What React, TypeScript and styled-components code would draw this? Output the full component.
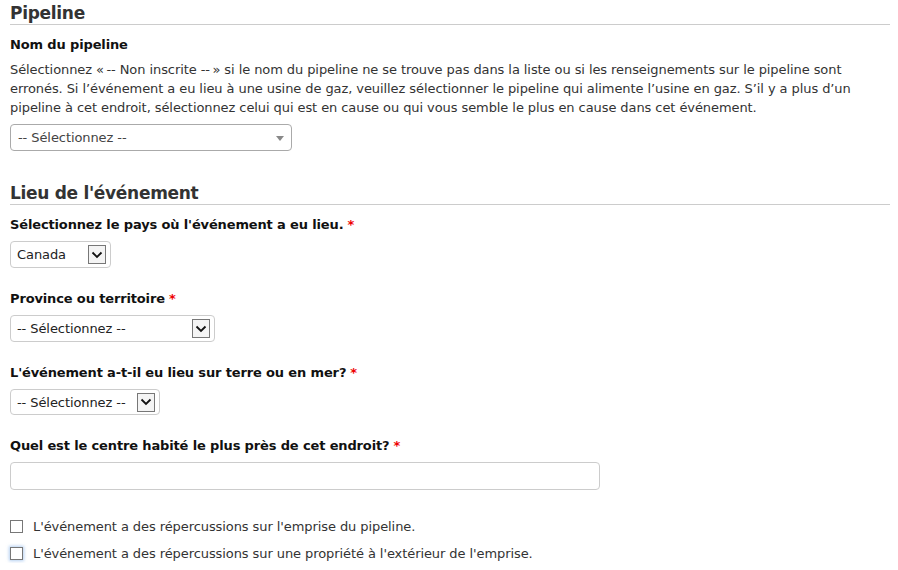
import React from "react";
import styled, { createGlobalStyle } from "styled-components";

const GlobalStyle = createGlobalStyle`
  html, body { margin: 0; padding: 0; background: #fff; }
  body {
    font-family: "DejaVu Sans", Verdana, sans-serif;
    font-size: 13px;
    letter-spacing: -0.08px;
    color: #333;
  }
`;

const Page = styled.div`
  width: 880px;
  padding: 3px 8px 0 10px;
`;

const SectionTitle = styled.h2<{ $top?: number }>`
  margin: ${(p) => p.$top ?? 0}px 0 10px 0;
  font-size: 17px;
  letter-spacing: -0.3px;
  line-height: 21px;
  font-weight: bold;
  color: #333;
  border-bottom: 1px solid #ccc;
`;

const Group = styled.div`
  display: flex;
  flex-direction: column;
  align-items: flex-start;
  gap: 7px;
  margin-bottom: 21px;
`;

const Label = styled.div`
  font-weight: bold;
  letter-spacing: -0.14px;
  line-height: 19px;
  color: #111;
`;

const Req = styled.span`
  color: #e00;
  margin-left: 4px;
`;

const Help = styled.p`
  margin: -1px 0 0 0;
  line-height: 19px;
  color: #333;
`;

const ChosenSelect = styled.div<{ $w: number }>`
  box-sizing: border-box;
  width: ${(p) => p.$w}px;
  height: 27px;
  border: 1px solid #aaa;
  border-radius: 4px;
  display: flex;
  align-items: center;
  justify-content: space-between;
  padding: 0 7px 0 7px;
  color: #444;
  background: #fff;
`;

const Triangle = styled.span`
  width: 0;
  height: 0;
  border-left: 4px solid transparent;
  border-right: 4px solid transparent;
  border-top: 5px solid #888;
  margin-top: 1px;
`;

const NativeSelect = styled.div<{ $w: number; $h?: number }>`
  box-sizing: border-box;
  width: ${(p) => p.$w}px;
  height: ${(p) => p.$h ?? 27}px;
  border: 1px solid #ccc;
  border-radius: 4px;
  display: flex;
  align-items: center;
  justify-content: space-between;
  padding: 0 4px 0 6px;
  color: #222;
  background: #fff;
`;

const ChevronBox = styled.span`
  box-sizing: border-box;
  width: 18px;
  height: 19px;
  border: 1px solid #777;
  background: #f4f4f4;
  display: flex;
  align-items: center;
  justify-content: center;
`;

const TextInput = styled.div`
  box-sizing: border-box;
  width: 590px;
  height: 28px;
  border: 1px solid #ccc;
  border-radius: 4px;
  background: #fff;
`;

const CheckList = styled.div`
  display: flex;
  flex-direction: column;
  gap: 8px;
  margin-top: 27px;
`;

const CheckRow = styled.label`
  display: flex;
  align-items: center;
  gap: 10px;
  line-height: 19px;
  color: #333;
`;

const Box = styled.span<{ $focus?: boolean }>`
  box-sizing: border-box;
  width: 13px;
  height: 13px;
  border: 1px solid #777;
  background: #fff;
  box-shadow: ${(p) => (p.$focus ? "0 0 3px 1px rgba(120,170,230,0.55)" : "none")};
`;

const Chevron = () => (
  <svg width="12" height="8" viewBox="0 0 12 8">
    <path d="M1.5 1.5 L6 6 L10.5 1.5" fill="none" stroke="#111" strokeWidth="1.8" />
  </svg>
);

export default function App() {
  return (
    <>
      <GlobalStyle />
      <Page>
        <SectionTitle>Pipeline</SectionTitle>
        <Group>
          <Label>Nom du pipeline</Label>
          <Help>
            Sélectionnez «&thinsp;-- Non inscrite --&thinsp;» si le nom du pipeline ne se trouve pas dans la liste ou si les
            renseignements sur le pipeline sont erronés. Si l’événement a eu lieu à une usine de gaz, veuillez
            sélectionner le pipeline qui alimente l’usine en gaz. S’il y a plus d’un pipeline à cet endroit,
            sélectionnez celui qui est en cause ou qui vous semble le plus en cause dans cet événement.
          </Help>
          <ChosenSelect $w={282}>
            <span>-- Sélectionnez --</span>
            <Triangle />
          </ChosenSelect>
        </Group>

        <SectionTitle $top={32}>Lieu de l'événement</SectionTitle>
        <Group>
          <Label>
            Sélectionnez le pays où l'événement a eu lieu.<Req>*</Req>
          </Label>
          <NativeSelect $w={101}>
            <span>Canada</span>
            <ChevronBox>
              <Chevron />
            </ChevronBox>
          </NativeSelect>
        </Group>
        <Group>
          <Label>
            Province ou territoire<Req>*</Req>
          </Label>
          <NativeSelect $w={205}>
            <span>-- Sélectionnez --</span>
            <ChevronBox>
              <Chevron />
            </ChevronBox>
          </NativeSelect>
        </Group>
        <Group>
          <Label>
            L'événement a-t-il eu lieu sur terre ou en mer?<Req>*</Req>
          </Label>
          <NativeSelect $w={150} $h={26}>
            <span>-- Sélectionnez --</span>
            <ChevronBox>
              <Chevron />
            </ChevronBox>
          </NativeSelect>
        </Group>
        <Group>
          <Label>
            Quel est le centre habité le plus près de cet endroit?<Req>*</Req>
          </Label>
          <TextInput />
        </Group>
        <CheckList>
          <CheckRow>
            <Box />
            L'événement a des répercussions sur l'emprise du pipeline.
          </CheckRow>
          <CheckRow>
            <Box $focus />
            L'événement a des répercussions sur une propriété à l'extérieur de l'emprise.
          </CheckRow>
        </CheckList>
      </Page>
    </>
  );
}
